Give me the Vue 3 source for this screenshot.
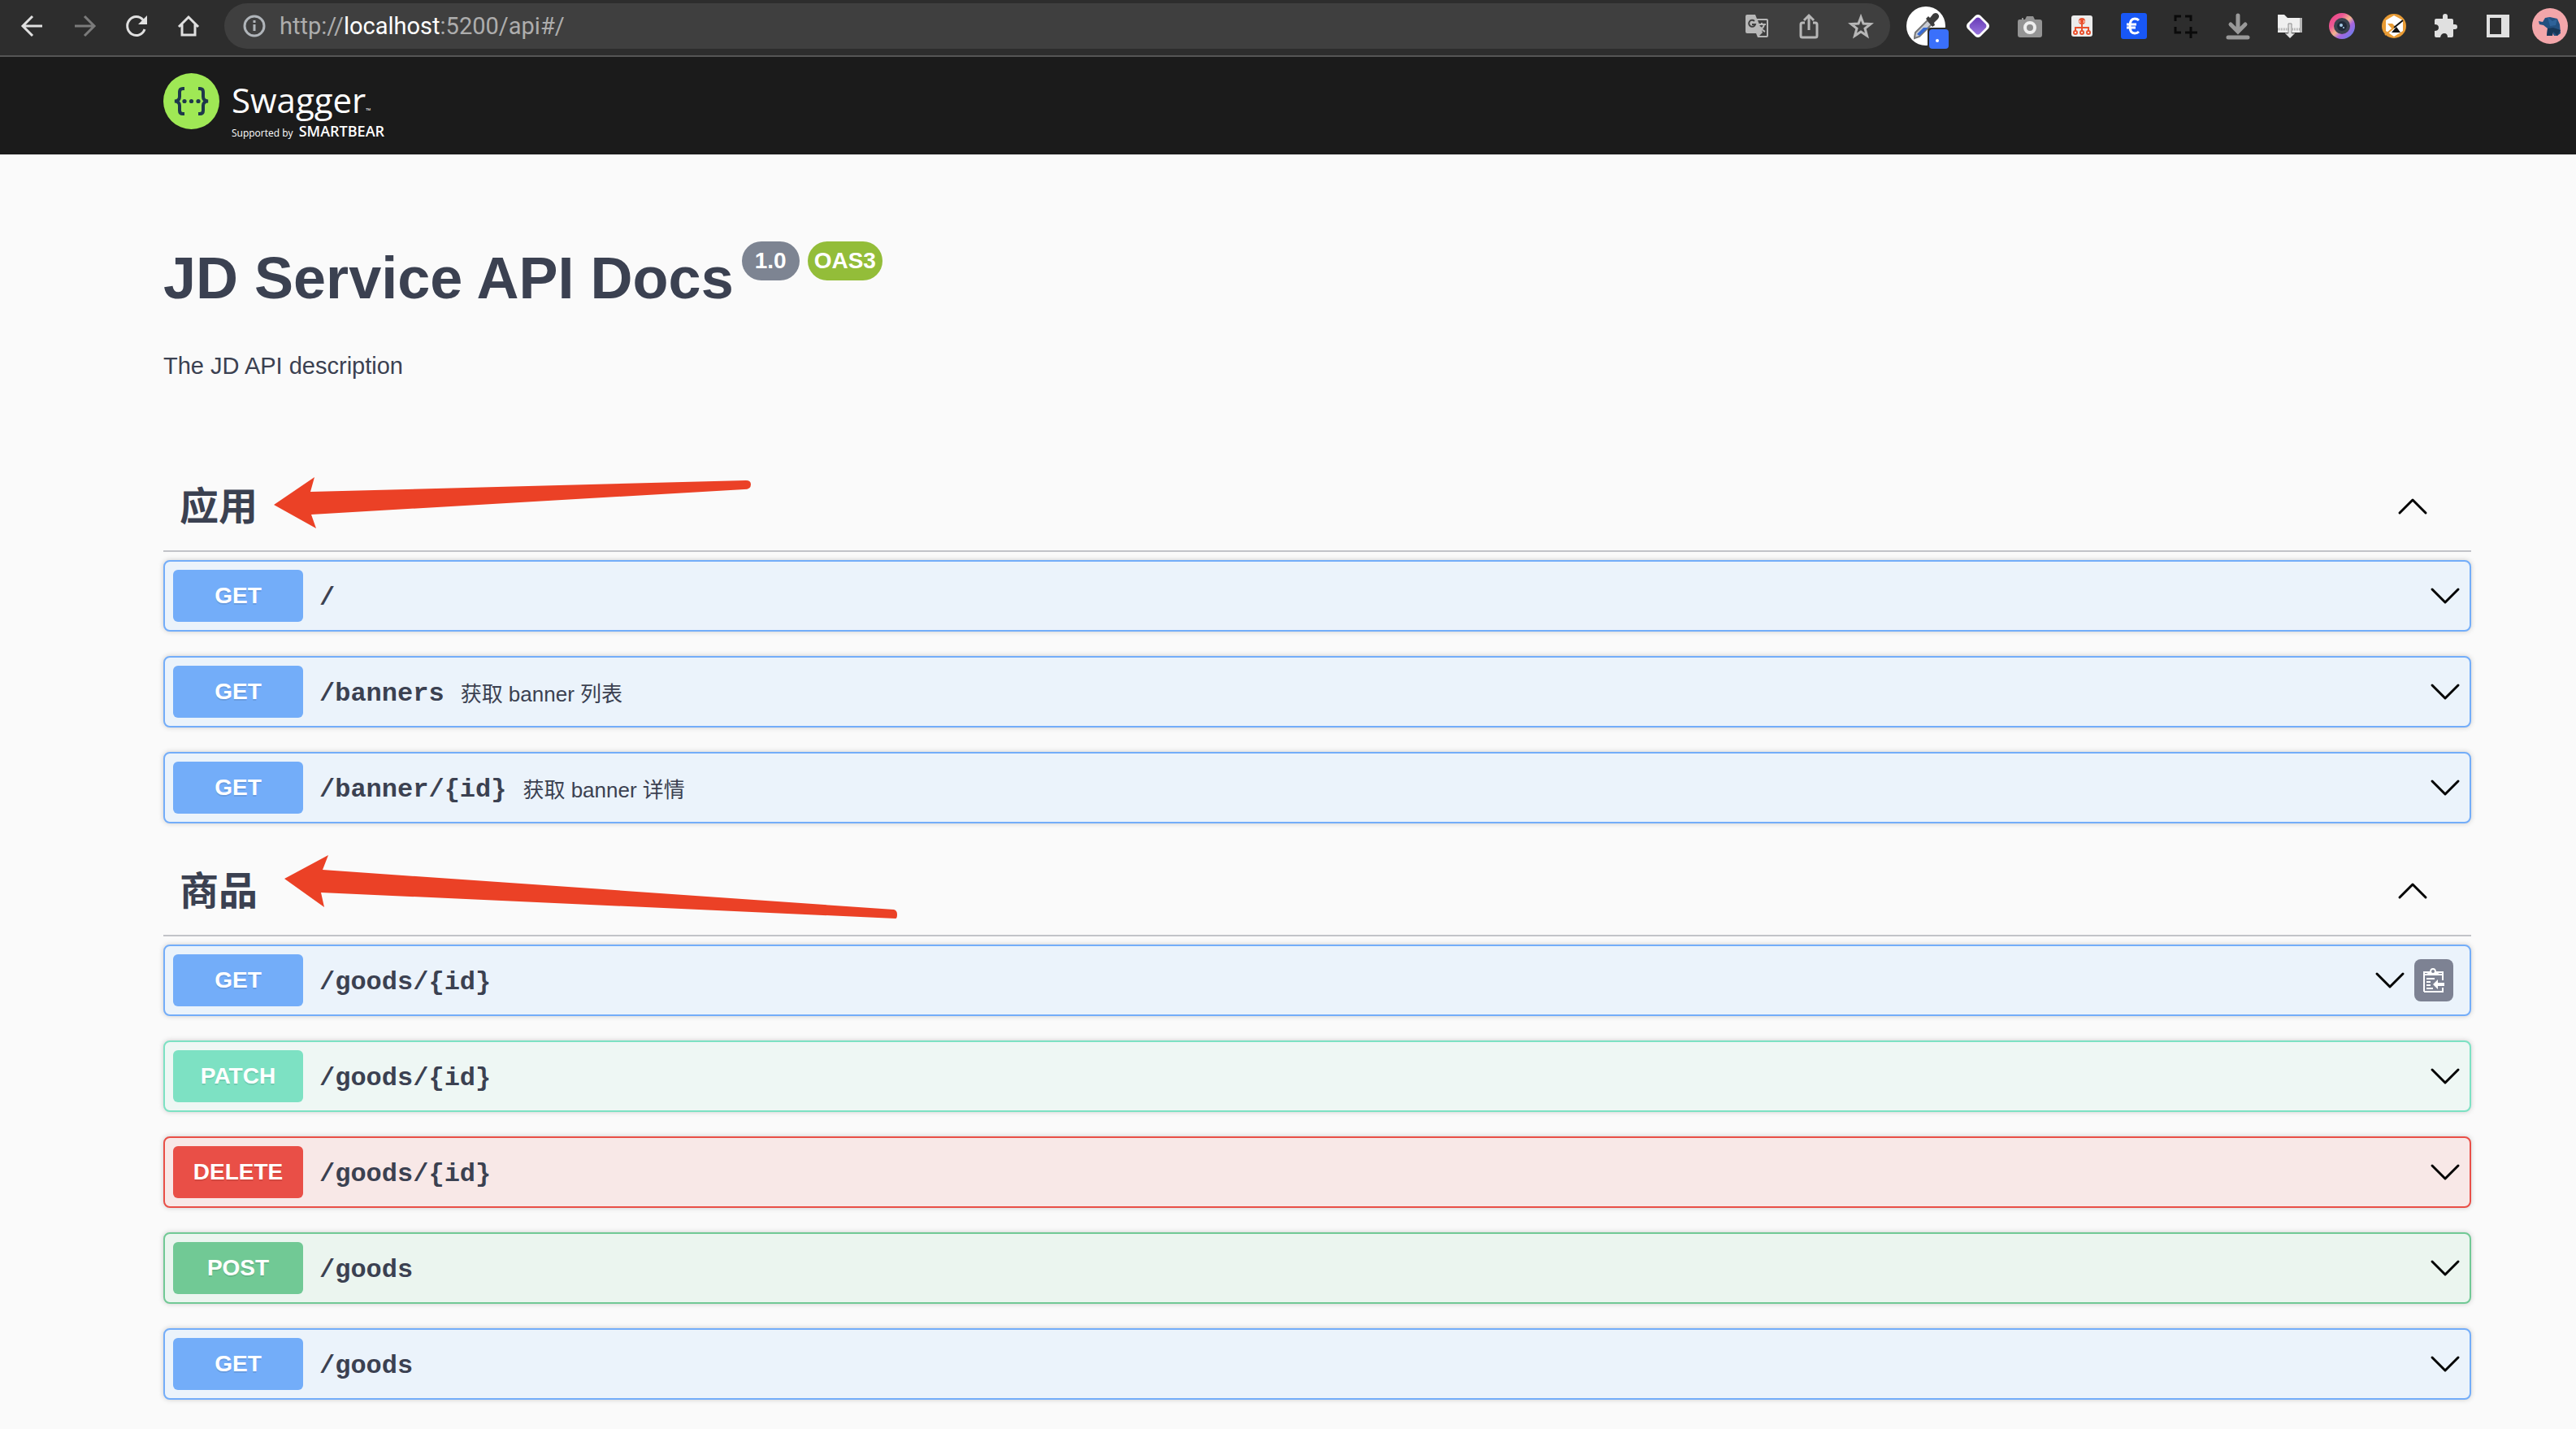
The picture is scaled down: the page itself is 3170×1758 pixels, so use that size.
<script setup>
import { ref } from 'vue'

const version = '1.0'
const sections = ref([
  {
    name: '应用',
    arrow: 'M136 51 L186 17 L181 35 L717 21 Q723 21 723 26 Q723 32 715 32 L182 63 L188 80 Z',
    operations: [
      { method: 'GET', path: '/' },
      { method: 'GET', path: '/banners', summary: '获取 banner 列表' },
      { method: 'GET', path: '/banner/{id}', summary: '获取 banner 详情' },
    ],
  },
  {
    name: '商品',
    arrow: 'M149 38 L203 9 L196 27 L899 76 Q903 77 903 82 Q903 87 901 87 L194 55 L198 73 Z',
    operations: [
      { method: 'GET', path: '/goods/{id}', copy: true },
      { method: 'PATCH', path: '/goods/{id}' },
      { method: 'DELETE', path: '/goods/{id}' },
      { method: 'POST', path: '/goods' },
      { method: 'GET', path: '/goods' },
    ],
  },
])
</script>

<template>
  <div class="window">
    <nav class="browser" aria-label="Browser toolbar">
      <div class="cells nav-cells">
        <button class="cell" aria-label="Back">
          <svg width="32" height="32" viewBox="0 0 32 32" fill="none" stroke="#e0e0e0" stroke-width="3"><path d="M28 16H5M16 4L4 16L16 28" /></svg>
        </button>
        <button class="cell" aria-label="Forward">
          <svg width="32" height="32" viewBox="0 0 32 32" fill="none" stroke="#7b7b7b" stroke-width="3"><path d="M4 16H27M16 4L28 16L16 28" /></svg>
        </button>
        <button class="cell" aria-label="Reload">
          <svg width="32" height="32" viewBox="0 0 32 32" fill="none" stroke="#e0e0e0" stroke-width="3"><path d="M26 20A11 11.500 0 1 1 24 8.500" /><path d="M29 3V14H18Z" fill="#e0e0e0" stroke="none" /></svg>
        </button>
        <button class="cell" aria-label="Home">
          <svg width="32" height="32" viewBox="0 0 32 32" fill="none" stroke="#e0e0e0" stroke-width="3"><path d="M4 17L16 5L28 17M8 14V27H24V14" /></svg>
        </button>
      </div>

      <div class="address">
        <svg class="info" width="28" height="28" viewBox="0 0 28 28" fill="none" stroke="#b0b5ba" stroke-width="3"><circle cx="14" cy="14" r="12" /><path d="M14 12V20M14 7V10" /></svg>
        <div class="url" role="textbox" aria-label="Address">http://<b>localhost</b>:5200/api#/</div>
        <div class="cells">
          <button class="cell" aria-label="Translate">
            <svg width="32" height="32" viewBox="0 0 32 32"><path d="M4 2H14L16 7H28Q30 7 30 9V28Q30 30 28 30H17L15 25H4Q2 25 2 23V4Q2 2 4 2Z" fill="#b7b7b7" /><path d="M17 9H28V28H19L23 24L17 9Z" fill="#3f3f3f" /><path d="M18 14H27M22 12V14M25 14Q24 19 18 23M20 17Q22 21 26 23" fill="none" stroke="#b7b7b7" stroke-width="2" /><path d="M13 10A4 4 0 1 0 14 14H10" fill="none" stroke="#3f3f3f" stroke-width="2" /></svg>
          </button>
          <button class="cell" aria-label="Share">
            <svg width="32" height="32" viewBox="0 0 32 32" fill="none" stroke="#b7b7b7" stroke-width="3"><path d="M11 12H8Q6 12 6 14V28Q6 30 8 30H24Q26 30 26 28V14Q26 12 24 12H21M16 21V4M10 9L16 3L22 9" /></svg>
          </button>
          <button class="cell" aria-label="Bookmark">
            <svg width="32" height="32" viewBox="0 0 32 32" fill="none" stroke="#b7b7b7" stroke-width="3"><path d="M16 5L19 13L28 13.500L21 19L23.500 28L16 23L8.500 28L11 19L4 13.500L13 13Z" /></svg>
          </button>
        </div>
      </div>

      <div class="cells">
        <button class="cell" aria-label="Color picker">
          <svg width="56" height="56" viewBox="0 0 56 56"><circle cx="28" cy="28" r="24" fill="#fff" /><path d="M14 42L15 36L30 21L35 26L20 41L14 43Z" fill="#c9ccd3" stroke="#777" stroke-width="2" /><path d="M17 38L25 30H31L20 40Z" fill="#3569d4" /><path d="M28 19L31 16L33 18L37 13Q42 10 44 15Q45 18 40 22L38 24L39 27L36 29Z" fill="#3c3c3c" /><rect x="30" y="30" width="28" height="28" rx="4" fill="#2d2d2d" /><rect x="32" y="32" width="24" height="24" rx="4" fill="#3a70fb" /><circle cx="42" cy="46" r="2" fill="#fff" /></svg>
        </button>
        <button class="cell" aria-label="Diamond extension">
          <svg width="32" height="32" viewBox="0 0 32 32"><defs><linearGradient id="gem" x1="0" y1="0" x2="0" y2="1"><stop offset="0" stop-color="#673ab7" /><stop offset="1" stop-color="#9774dc" /></linearGradient></defs><path d="M13 3Q16 1 19 3L29 13Q31 16 29 19L19 29Q16 31 13 29L3 19Q1 16 3 13Z" fill="#fff" /><path d="M14 6Q16 5 18 6L26 14Q27 16 26 18L18 26Q16 27 14 26L6 18Q5 16 6 14Z" fill="url(#gem)" /></svg>
        </button>
        <button class="cell" aria-label="Screenshot extension">
          <svg width="32" height="32" viewBox="0 0 32 32"><path d="M3 8H6V6H8V8H10L12 4H20L22 8H28Q31 8 31 11V27Q31 30 28 30H4Q1 30 1 27V11Q1 8 3 8Z" fill="#949494" /><circle cx="16" cy="18" r="6" fill="#8b8b8b" stroke="#eee" stroke-width="4" /></svg>
        </button>
        <button class="cell" aria-label="Sitemap extension">
          <svg width="32" height="32" viewBox="0 0 32 32"><rect x="3" y="3" width="26" height="26" rx="3" fill="#ececec" /><circle cx="16" cy="10" r="4" fill="#e9502d" /><path d="M16 14V22M8 22V18H24V22" fill="none" stroke="#e9502d" stroke-width="2" /><path d="M14 9L13 10L14 12M18 9L19 10L18 12" stroke="#fff" fill="none" /><g fill="#fff" stroke="#e9502d" stroke-width="2"><circle cx="8" cy="24" r="2" /><circle cx="16" cy="24" r="2" /><circle cx="24" cy="24" r="2" /></g></svg>
        </button>
        <button class="cell" aria-label="Currency extension">
          <svg width="32" height="32" viewBox="0 0 32 32"><rect width="32" height="32" rx="3" fill="#1857f5" /><path d="M22 9Q20 7 17 7Q11 7 11 16Q11 25 17 25Q20 25 22 23M7 14H19M7 18H18" fill="none" stroke="#fff" stroke-width="3" /></svg>
        </button>
        <button class="cell" aria-label="Capture area">
          <svg width="32" height="32" viewBox="0 0 32 32" fill="none" stroke="#0a0a0a" stroke-width="3"><path d="M3 10V4H10M15 4H22V10M3 17V24H10M22 17V31M15 24H30" /></svg>
        </button>
        <button class="cell" aria-label="Downloads">
          <svg width="32" height="34" viewBox="0 0 32 34" fill="none" stroke="#999" stroke-width="5" stroke-linecap="round"><path d="M16 4V22M7 15L16 24L25 15M4 31H28" /></svg>
        </button>
        <button class="cell" aria-label="Folder extension">
          <svg width="32" height="32" viewBox="0 0 32 32"><path d="M4 6H31V24H4Z" fill="#b5b5b5" /><path d="M1 2H9L13 6H28V24H1Z" fill="#efefef" /><path d="M1 20H28" stroke="#aaa" stroke-width="3" stroke-dasharray="1 1" /><path d="M14 13H18V25H22L16 31L10 25H14Z" fill="#e4e4e4" stroke="#8b8b8b" /></svg>
        </button>
        <button class="cell" aria-label="Lens extension">
          <svg width="32" height="32" viewBox="0 0 32 32"><defs><linearGradient id="lens" x1="0" y1="0" x2="1" y2="1"><stop offset="0" stop-color="#f0407c" /><stop offset=".3" stop-color="#ec5795" /><stop offset=".5" stop-color="#f3b58e" /><stop offset=".65" stop-color="#a864de" /><stop offset="1" stop-color="#4b8cf2" /></linearGradient></defs><circle cx="16" cy="16" r="16" fill="url(#lens)" /><circle cx="16" cy="16" r="10" fill="#3a424e" /><circle cx="16" cy="16" r="6" fill="#202a38" /><circle cx="15" cy="15" r="2" fill="#a5cbe8" /><circle cx="18" cy="18" r="1" fill="#a5cbe8" /></svg>
        </button>
        <button class="cell" aria-label="Hexagon extension">
          <svg width="32" height="32" viewBox="0 0 32 32"><circle cx="16" cy="16" r="15" fill="#e99c35" /><path d="M16 3L27 9V22L16 29L6 22V9Z" fill="#fff" /><path d="M8 13H14L17 16L14 20Z" fill="#e99c35" /><path d="M19 17L24 24H13Z" fill="#111" /><path d="M5 27L16 18" stroke="#e99c35" stroke-width="2" /><path d="M16 18L27 9" stroke="#111" stroke-width="2" /></svg>
        </button>
        <button class="cell" aria-label="Extensions">
          <svg width="32" height="32" viewBox="0 0 32 32"><path d="M4 7H12V4Q12 1 15 1Q18 1 18 4V7H23Q25 7 25 9V14H27Q30 14 30 17Q30 20 27 20H25V28Q25 30 23 30H18Q18 25 14 25Q10 25 9 30H4Q2 30 2 28V22Q7 22 7 18Q7 14 2 14V9Q2 7 4 7Z" fill="#e0e0e0" /></svg>
        </button>
        <button class="cell" aria-label="Side panel">
          <svg width="28" height="28" viewBox="0 0 28 28"><path d="M0 0H28V28H0ZM4 4V24H18V4Z" fill="#e0e0e0" fill-rule="evenodd" /></svg>
        </button>
        <button class="cell" aria-label="Profile">
          <svg width="44" height="44" viewBox="0 0 44 44"><circle cx="22" cy="22" r="22" fill="#f2a6aa" /><path d="M8 16L13 17L16 12L22 11L31 13L34 20L35 31L31 34H27L25 30L24 34H18L19 25L14 21L9 20Z" fill="#23507f" /><path d="M19 11L25 16L31 13L29 21L22 22Z" fill="#2f6399" /><path d="M19 25L26 24L35 27L31 34L26 29L25 34H18Z" fill="#173757" /></svg>
        </button>
      </div>
    </nav>

    <header class="topbar">
      <a href="#/" class="logo">
        <svg width="69" height="69" viewBox="0 0 69 69"><circle cx="34.500" cy="34.500" r="34.500" fill="#9fe855" /><g fill="none" stroke="#1e384b" stroke-width="4"><path d="M26 19H24Q20 19 20 23V29Q20 34 14 34.500Q20 35 20 40V46Q20 50 24 50H26" /><path d="M43 19H45Q49 19 49 23V29Q49 34 55 34.500Q49 35 49 40V46Q49 50 45 50H43" /></g><g fill="#1e384b"><circle cx="26" cy="34.500" r="2.600" /><circle cx="34.500" cy="34.500" r="2.600" /><circle cx="43" cy="34.500" r="2.600" /></g></svg>
        <span class="wordmark">
          <span class="brand">Swagger<small>™</small></span>
          <span class="support">Supported by <strong>SMARTBEAR</strong></span>
        </span>
      </a>
    </header>

    <main class="content">
      <section class="intro">
        <div class="title">
          <h1>JD Service API Docs</h1>
          <span class="pill">{{ version }}</span>
          <span class="pill oas">OAS3</span>
        </div>
        <p>The JD API description</p>
      </section>

      <section v-for="section in sections" :key="section.name">
        <div class="tag">
          <h2>{{ section.name }}</h2>
          <button class="toggle" :aria-label="'Collapse ' + section.name">
            <svg width="40" height="40" viewBox="0 0 40 40" class="chevron"><path d="M4 27L20 11L36 27" /></svg>
          </button>
          <svg class="arrow" width="910" height="109" viewBox="0 0 910 109"><path :d="section.arrow" fill="#eb4126" /></svg>
        </div>
        <div
          v-for="op in section.operations"
          :key="op.method + op.path"
          class="operation"
          :class="op.method.toLowerCase()"
        >
          <button class="summary">
            <span class="method">{{ op.method }}</span>
            <span class="path">{{ op.path }}</span>
            <span class="description">{{ op.summary }}</span>
            <svg width="40" height="40" viewBox="0 0 40 40" class="chevron"><path d="M4 12L20 28L36 12" /></svg>
          </button>
          <button v-if="op.copy" class="copy" aria-label="Copy to clipboard">
            <svg width="26" height="30" viewBox="0 0 26 30"><path d="M1 29V5H24V15M24 24V29H1M1 8H24" fill="none" stroke="#fff" stroke-width="2" /><path d="M4 9V7L8 5Q8 0 12 0Q16 0 16 5L20 7V9Z" fill="#fff" /><circle cx="12" cy="4" r="2" fill="#7d8293" /><path d="M4 13H14M4 17H9M4 21H9M4 25H12" stroke="#fff" stroke-width="2" /><path d="M12 20L18 14V18H26V22H18V26Z" fill="#fff" /></svg>
          </button>
        </div>
      </section>
    </main>
  </div>
</template>

<style>
body {
  margin: 0;
  background: #fafafa;
}
</style>

<style scoped>
.window {
  color: #3b4151;
  font-family: "Liberation Sans", "Noto Sans CJK SC", sans-serif;
}
button {
  padding: 0;
  border: 0;
  background: none;
  color: inherit;
  font: inherit;
  cursor: pointer;
}
svg {
  display: block;
  flex: none;
}

/* Browser toolbar */
.browser {
  display: flex;
  align-items: center;
  gap: 12px;
  height: 64px;
  padding-bottom: 4px;
  border-bottom: 2px solid #555;
  background: #2d2d2d;
}
.cells {
  display: flex;
  flex: none;
}
.nav-cells {
  padding-left: 8px;
}
.cell {
  display: flex;
  align-items: center;
  justify-content: center;
  width: 64px;
  height: 56px;
}
.address {
  display: flex;
  flex: 1;
  align-items: center;
  height: 56px;
  padding: 0 4px 0 23px;
  border-radius: 28px;
  background: #3f3f3f;
}
.url {
  flex: 1;
  margin-left: 17px;
  color: #adadad;
  font-family: Roboto, sans-serif;
  font-size: 29px;
  line-height: 36px;
}
.url b {
  color: #fff;
  font-weight: 400;
}

/* Swagger header */
.topbar {
  height: 100px;
  padding: 20px 129px 0 201px;
  background: #1b1b1b;
}
.logo {
  display: inline-flex;
  gap: 15px;
  color: #fff;
  text-decoration: none;
}
.wordmark {
  display: flex;
  flex-direction: column;
  padding-top: 5px;
  font-family: "Open Sans", sans-serif;
}
.brand {
  font-size: 42px;
  line-height: 56px;
}
.brand small {
  font-size: 8px;
  line-height: 8px;
}
.support {
  font-size: 12px;
  line-height: 20px;
}
.support strong {
  margin-left: 4px;
  font-size: 18px;
  font-weight: 600;
}

/* Documentation */
.content {
  padding: 107px 129px 36px 201px;
}
.intro {
  padding-bottom: 103px;
}
.title {
  display: flex;
  align-items: flex-start;
  gap: 10px;
}
h1 {
  margin: 0;
  font-size: 72px;
  font-weight: 700;
  line-height: 90px;
}
.pill {
  padding: 0 16px;
  border-radius: 24px;
  background: #7d8492;
  color: #fff;
  font-size: 28px;
  font-weight: 700;
  line-height: 48px;
}
.pill.oas {
  padding: 0 8px;
  background: #93bd39;
}
.intro p {
  margin: 46px 0 0;
  font-size: 29px;
  line-height: 34px;
}
.tag {
  position: relative;
  display: flex;
  align-items: center;
  justify-content: space-between;
  height: 107px;
  margin-bottom: 10px;
  padding: 0 52px 0 20px;
  border-bottom: 2px solid #c2c3c8;
}
h2 {
  margin: 0;
  font-size: 48px;
  font-weight: 700;
  line-height: 56px;
}
.arrow {
  position: absolute;
  top: 0;
  left: 0;
  pointer-events: none;
}
.chevron {
  fill: none;
  stroke: #000;
  stroke-width: 3;
  stroke-linecap: round;
  stroke-linejoin: round;
}
.operation {
  --accent: #73adf9;
  --tint: #ebf3fb;
  display: flex;
  align-items: center;
  margin-bottom: 30px;
  border: 2px solid var(--accent);
  border-radius: 8px;
  background: var(--tint);
  box-shadow: 0 0 6px rgba(0, 0, 0, 0.19);
}
.patch {
  --accent: #7de1c3;
  --tint: #eef7f4;
}
.delete {
  --accent: #e94f47;
  --tint: #f8e8e7;
}
.post {
  --accent: #71c995;
  --tint: #ebf5ef;
}
.summary {
  display: flex;
  flex: 1;
  align-items: center;
  gap: 20px;
  padding: 10px;
  text-align: left;
}
.method {
  width: 160px;
  border-radius: 6px;
  background: var(--accent);
  color: #fff;
  font-size: 28px;
  font-weight: 700;
  line-height: 64px;
  text-align: center;
  text-shadow: 0 2px 0 rgba(0, 0, 0, 0.1);
}
.path {
  padding-top: 4px;
  font-family: "Liberation Mono", monospace;
  font-size: 32px;
  font-weight: 700;
}
.description {
  flex: 1;
  font-size: 26px;
}
.copy {
  display: flex;
  align-items: center;
  justify-content: center;
  width: 48px;
  height: 52px;
  margin-right: 20px;
  border-radius: 8px;
  background: #7d8293;
}
</style>
